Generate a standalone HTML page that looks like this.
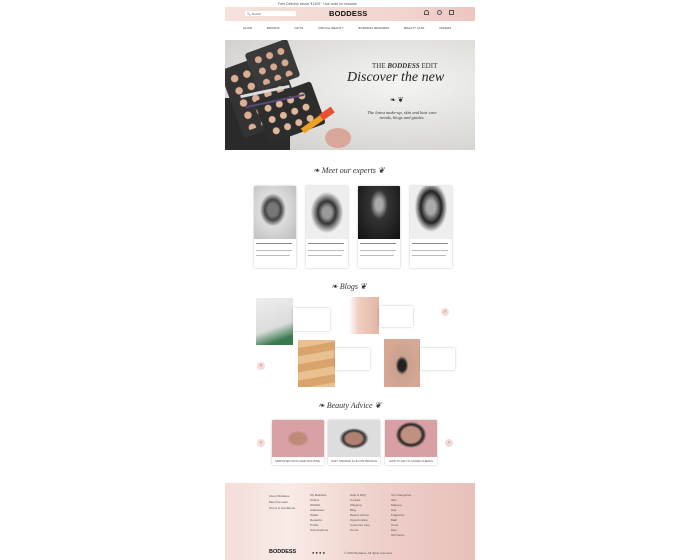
<!DOCTYPE html>
<html><head><meta charset="utf-8"><style>
*{margin:0;padding:0;box-sizing:border-box}
body{width:700px;height:560px;background:#fff;position:relative;overflow:hidden;font-family:"Liberation Sans",sans-serif;color:#222}
.a{position:absolute}
.t{font-size:3px;color:#555;white-space:nowrap}
.ser{font-family:"Liberation Serif",serif;font-style:italic;color:#333}
.card{position:absolute;background:#fff;box-shadow:0 0 2px rgba(0,0,0,.25);border-radius:1px;overflow:hidden}
.ln{position:absolute;height:1px;background:#bbb}
.arrow{position:absolute;width:8px;height:8px;border-radius:50%;background:#f3dcd8;color:#a55;font-size:6px;line-height:8px;text-align:center}
</style></head><body>
<div class="a t" style="left:278px;top:2px;font-size:3.5px">Free Delivery above ₹1499 · Use code for rewards</div>
<div class="a" style="left:225px;top:7px;width:250px;height:14px;background:linear-gradient(90deg,#f6e1dc,#f2d4cf 70%,#ecc6c1)"></div>
<div class="a" style="left:245px;top:11px;width:51px;height:5px;background:#fff;border-radius:1px"></div>
<div class="a t" style="left:247px;top:12px">🔍 Search</div>
<div class="a" style="left:329px;top:9px;font-size:7.5px;font-weight:bold;letter-spacing:.2px;color:#111">BODDESS</div>
<div class="a" style="left:424px;top:10px;width:5px;height:5px;border:1px solid #555;border-radius:50% 50% 0 0"></div>
<div class="a" style="left:437px;top:10px;width:5px;height:5px;border:1px solid #555;border-radius:50%"></div>
<div class="a" style="left:449px;top:10px;width:5px;height:5px;border:1px solid #555"></div>
<div class="a t" style="left:243px;top:26px;word-spacing:14px;color:#444">GLOW BRANDS GIFTS VIRTUAL·BEAUTY BODDESS·REWARDS BEAUTY·QUIZ OFFERS</div>
<div class="a" style="left:225px;top:40px;width:250px;height:110px;overflow:hidden;background:radial-gradient(ellipse at 70% 40%,#f4f4f2,#d9d8d4 70%,#c9c8c4)">
<div class="a" style="left:0;top:58px;width:65px;height:52px;background:#2a2a2a"></div>
<div class="a" style="left:5px;top:18px;width:62px;height:72px;background:#333;transform:rotate(-20deg);border-radius:3px"></div>
<div class="a" style="left:10px;top:24px;width:52px;height:60px;transform:rotate(-20deg);background:radial-gradient(circle,#dcae92 38%,transparent 43%) 0 0/13px 13px"></div>
<div class="a" style="left:25px;top:5px;width:45px;height:40px;background:#3a3a3a;transform:rotate(-20deg);border-radius:3px"></div>
<div class="a" style="left:30px;top:9px;width:36px;height:32px;transform:rotate(-20deg);background:radial-gradient(circle,#d9a890 38%,transparent 43%) 0 0/12px 12px"></div>
<div class="a" style="left:35px;top:50px;width:60px;height:45px;background:#2d2d2d;transform:rotate(-20deg);border-radius:3px"></div>
<div class="a" style="left:40px;top:55px;width:50px;height:36px;transform:rotate(-20deg);background:radial-gradient(circle,#e2b89c 38%,transparent 43%) 0 0/12px 12px"></div>
<div class="a" style="left:15px;top:50px;width:50px;height:3px;background:#ddd;transform:rotate(-12deg)"></div>
<div class="a" style="left:20px;top:60px;width:60px;height:2px;background:#5a4a7a;transform:rotate(-12deg)"></div>
<div class="a" style="left:75px;top:80px;width:28px;height:6px;background:#f0a020;transform:rotate(-35deg)"></div>
<div class="a" style="left:95px;top:70px;width:14px;height:7px;background:#e85030;transform:rotate(-35deg)"></div>
<div class="a" style="left:100px;top:88px;width:26px;height:20px;border-radius:50%;background:#d9a79a"></div>
</div>
<div class="a" style="left:372px;top:62px;font-family:'Liberation Serif',serif;font-size:7px;color:#333">THE <b><i>BODDESS</i></b> EDIT</div>
<div class="a ser" style="left:347px;top:70px;font-size:14px;color:#222">Discover the new</div>
<div class="a" style="left:390px;top:96px;font-size:7px;color:#222">❧ ❦</div>
<div class="a ser" style="left:361px;top:110px;font-size:4.5px;text-align:center;width:82px;line-height:5px">The latest make-up, skin and hair care trends, blogs and guides.</div>
<div class="a ser" style="left:313px;top:166px;font-size:8px">❧ Meet our experts ❦</div>
<div class="card" style="left:254px;top:186px;width:42px;height:82px"><div style="height:53px;background:radial-gradient(ellipse at 45% 45%,#777 15%,#444 25%,#ddd 40%,#bbb)"></div></div>
<div class="card" style="left:306px;top:186px;width:42px;height:82px"><div style="height:53px;background:radial-gradient(ellipse at 50% 50%,#999 15%,#333 30%,#eee 55%)"></div></div>
<div class="card" style="left:358px;top:186px;width:42px;height:82px"><div style="height:53px;background:radial-gradient(ellipse at 50% 35%,#aaa 12%,#333 30%,#111)"></div></div>
<div class="card" style="left:410px;top:186px;width:42px;height:82px"><div style="height:53px;background:radial-gradient(ellipse at 50% 40%,#aaa 15%,#222 35%,#eee 55%)"></div></div>
<div class="ln" style="left:256px;top:243px;width:36px;background:#888"></div><div class="ln" style="left:256px;top:250px;width:36px"></div><div class="ln" style="left:256px;top:255px;width:34px"></div>
<div class="ln" style="left:308px;top:243px;width:36px;background:#888"></div><div class="ln" style="left:308px;top:250px;width:36px"></div><div class="ln" style="left:308px;top:255px;width:34px"></div>
<div class="ln" style="left:360px;top:243px;width:36px;background:#888"></div><div class="ln" style="left:360px;top:250px;width:36px"></div><div class="ln" style="left:360px;top:255px;width:34px"></div>
<div class="ln" style="left:412px;top:243px;width:36px;background:#888"></div><div class="ln" style="left:412px;top:250px;width:36px"></div><div class="ln" style="left:412px;top:255px;width:34px"></div>
<div class="a ser" style="left:331px;top:282px;font-size:8px">❧ Blogs ❦</div>
<div class="a" style="left:256px;top:298px;width:37px;height:47px;background:linear-gradient(160deg,#eee,#dcdcdc 60%,#3a7a50 85%)"></div>
<div class="card" style="left:293px;top:308px;width:37px;height:23px"></div>
<div class="a" style="left:345px;top:297px;width:34px;height:37px;background:linear-gradient(90deg,#fff 10%,#f0cfc0 40%,#e3b5a5)"></div>
<div class="card" style="left:379px;top:306px;width:34px;height:21px"></div>
<div class="a" style="left:298px;top:340px;width:37px;height:47px;background:repeating-linear-gradient(170deg,#e9c090 0 8px,#d9a36c 8px 16px)"></div>
<div class="card" style="left:335px;top:348px;width:35px;height:22px"></div>
<div class="a" style="left:384px;top:339px;width:36px;height:48px;background:radial-gradient(ellipse at 50% 55%,#222 15%,#caa090 25%,#d6a894 70%)"></div>
<div class="card" style="left:420px;top:348px;width:35px;height:22px"></div>
<div class="arrow" style="left:441px;top:308px">›</div>
<div class="arrow" style="left:257px;top:362px">‹</div>
<div class="a ser" style="left:318px;top:401px;font-size:8px">❧ Beauty Advice ❦</div>
<div class="card" style="left:272px;top:420px;width:52px;height:45px"><div style="height:37px;background:radial-gradient(ellipse at 50% 50%,#c08a78 22%,#d9a0a6 30%)"></div></div>
<div class="card" style="left:328px;top:420px;width:52px;height:45px"><div style="height:37px;background:radial-gradient(ellipse at 50% 50%,#b08070 22%,#333 30%,#ddd 40%)"></div></div>
<div class="card" style="left:385px;top:420px;width:52px;height:45px"><div style="height:37px;background:radial-gradient(ellipse at 50% 40%,#c09080 25%,#222 33%,#d8a0a4 42%)"></div></div>
<div class="a t" style="left:275px;top:459px;font-size:2.8px">SIMPLIFIED SKIN CARE ROUTINE</div>
<div class="a t" style="left:331px;top:459px;font-size:2.8px">SOFT SMOKED EYE FOR BRUNCH</div>
<div class="a t" style="left:389px;top:459px;font-size:2.8px">HOW TO GET FLUSHED CHEEKS</div>
<div class="arrow" style="left:257px;top:439px">‹</div>
<div class="arrow" style="left:445px;top:439px">›</div>
<div class="a" style="left:225px;top:483px;width:250px;height:77px;background:linear-gradient(90deg,#f3ddd8,#f9ebe6 25%,#efd0ca 60%,#e9c0bb)"></div>
<div class="a t" style="left:269px;top:493px;line-height:6px">About Boddess<br>Meet the team<br>Terms &amp; Conditions</div>
<div class="a t" style="left:310px;top:493px;line-height:5px">My Boddess<br>Orders<br>Wishlist<br>Addresses<br>Wallet<br>Rewards<br>Profile<br>Subscriptions</div>
<div class="a t" style="left:350px;top:493px;line-height:5px">Help &amp; FAQ<br>Contact<br>Shipping<br>Blog<br>Beauty Advice<br>Opportunities<br>Customer care<br>Terms</div>
<div class="a t" style="left:391px;top:493px;line-height:5px">Top Categories<br>Skin<br>Makeup<br>Hair<br>Fragrance<br>Bath<br>Tools<br>Men<br>Gift Cards</div>
<div class="a" style="left:269px;top:549px;font-size:5.5px;font-weight:bold;color:#111">BODDESS</div>
<div class="a t" style="left:312px;top:550px;font-size:4px;color:#333">● ● ● ●</div>
<div class="a t" style="left:344px;top:551px">© 2023 Boddess. All rights reserved</div>
</body></html>
